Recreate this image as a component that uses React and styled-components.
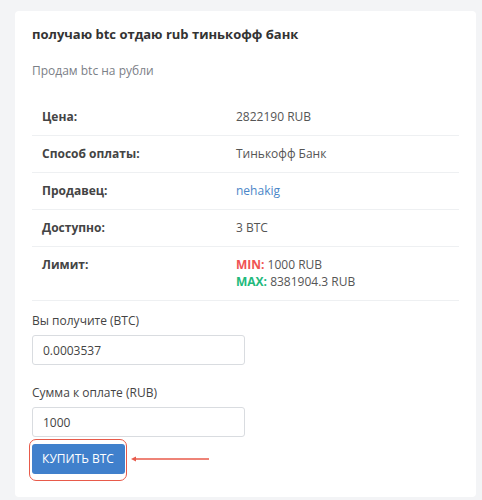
import styled, { createGlobalStyle } from 'styled-components';

const GlobalStyle = createGlobalStyle`
	* {
		box-sizing: border-box;
	}

	body {
		margin: 0;
		background: #f3f4f6;
		font-family: 'Open Sans', 'Liberation Sans', sans-serif;
		color: #444;
	}
`;

const Page = styled('div')`
	padding: 11px 6px 9px 15px;
`;

const Card = styled('section')`
	background: #fff;
	border-radius: 4px;
	padding: 13px 17px 16px;
`;

const Title = styled('h2')`
	margin: 0;
	font-size: 13px;
	font-weight: 700;
	line-height: 20px;
	color: #333;
`;

const Subtitle = styled('p')`
	margin: 17px 0 18px;
	font-size: 12px;
	line-height: 20px;
	color: #7b8087;
`;

const Table = styled('table')`
	width: 100%;
	border-collapse: collapse;
	font-size: 12px;
	margin-bottom: 10px;

	td {
		padding: 9px 10px;
		line-height: 18px;
		vertical-align: top;
		border-bottom: 1px solid #eef0f2;
	}
`;

const Label = styled('td')`
	width: 194px;
	font-weight: 700;
	color: #444;
`;

const Value = styled('td')`
	color: #555;
`;

const LimitValue = styled(Value)`
	&& {
		padding-bottom: 10px;
	}
`;

const Link = styled('a')`
	color: #4a86c8;
	text-decoration: none;
`;

const Limit = styled('div')`
	line-height: 17px;
`;

const Tag = styled('b')`
	color: ${(p) => p.$color};
`;

const Field = styled('div')`
	& + & {
		margin-top: 18px;
	}
`;

const FieldLabel = styled('label')`
	display: block;
	font-size: 12px;
	line-height: 20px;
	color: #444;
	margin-bottom: 4px;
`;

const Input = styled('input')`
	display: block;
	width: 213px;
	height: 30px;
	padding: 0 10px;
	border: 1px solid #d9dce0;
	border-radius: 3px;
	font: inherit;
	font-size: 12px;
	color: #444;
	outline: none;
`;

const Actions = styled('div')`
	display: flex;
	align-items: center;
	margin-top: 2px;
`;

const Highlight = styled('div')`
	margin-left: -3px;
	padding: 3.5px 1.5px 6.5px;
	border: 1.5px solid #e85a4a;
	border-radius: 7px;
`;

const Button = styled('button')`
	display: block;
	width: 93px;
	height: 30px;
	border: none;
	border-radius: 3px;
	background: #4080cc;
	color: #fff;
	font: inherit;
	font-size: 12px;
	text-transform: uppercase;
	cursor: pointer;
`;

const Arrow = styled('svg')`
	display: block;
	margin-left: 4px;
	margin-top: -3px;
`;

export default function App() {
	return (
		<>
			<GlobalStyle />
			<Page>
				<Card>
					<Title>получаю btc отдаю rub тинькофф банк</Title>
					<Subtitle>Продам btc на рубли</Subtitle>

					<Table>
						<tbody>
							<tr>
								<Label>Цена:</Label>
								<Value>2822190 RUB</Value>
							</tr>
							<tr>
								<Label>Способ оплаты:</Label>
								<Value>Тинькофф Банк</Value>
							</tr>
							<tr>
								<Label>Продавец:</Label>
								<Value>
									<Link href="#">nehakig</Link>
								</Value>
							</tr>
							<tr>
								<Label>Доступно:</Label>
								<Value>3 BTC</Value>
							</tr>
							<tr>
								<Label>Лимит:</Label>
								<LimitValue>
									<Limit>
										<Tag $color="#f05252">MIN:</Tag> 1000 RUB
									</Limit>
									<Limit>
										<Tag $color="#22b97c">MAX:</Tag> 8381904.3 RUB
									</Limit>
								</LimitValue>
							</tr>
						</tbody>
					</Table>

					<Field>
						<FieldLabel>Вы получите (BTC)</FieldLabel>
						<Input defaultValue="0.0003537" />
					</Field>
					<Field>
						<FieldLabel>Сумма к оплате (RUB)</FieldLabel>
						<Input defaultValue="1000" />
					</Field>

					<Actions>
						<Highlight>
							<Button>Купить BTC</Button>
						</Highlight>
						<Arrow width="78" height="8" viewBox="0 0 78 8">
							<path d="M3 4 H78" stroke="#e85a4a" strokeWidth="1.3" />
							<path d="M0 4 L5 1.5 L5 6.5 Z" fill="#e85a4a" />
						</Arrow>
					</Actions>
				</Card>
			</Page>
		</>
	);
}
